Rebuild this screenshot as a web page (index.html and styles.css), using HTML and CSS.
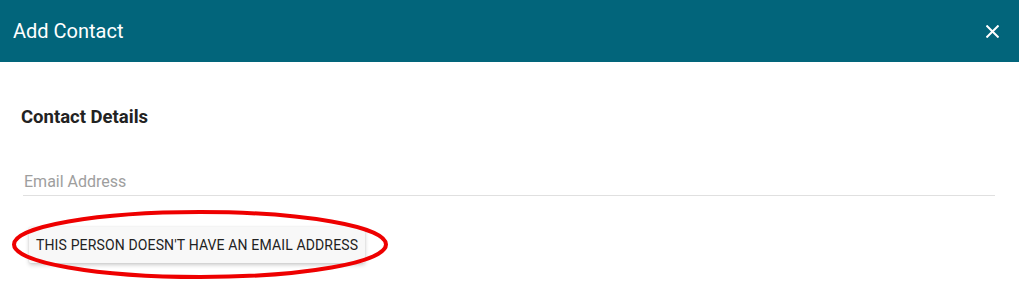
FILE: index.html
```html
<!DOCTYPE html>
<html lang="en">
<head>
<meta charset="UTF-8">
<meta name="viewport" content="width=device-width, initial-scale=1.0">
<title>Add Contact</title>
<link rel="stylesheet" href="styles.css">
</head>
<body>
<div class="dialog">
    <header class="dialog-header">
        <h1>Add Contact</h1>
        <button class="close-btn" aria-label="Close">
            <svg width="13" height="13" viewBox="0 0 13 13">
                <path d="M0.5 0.5 L12.5 12.5 M12.5 0.5 L0.5 12.5" stroke="#fff" stroke-width="2" fill="none"/>
            </svg>
        </button>
    </header>
    <div class="dialog-body">
        <h2>Contact Details</h2>
        <div class="field">
            <input type="email" placeholder="Email Address">
        </div>
        <div class="no-email">
            <button class="flat-btn">This person doesn't have an email address</button>
            <svg class="highlight" width="382" height="74" viewBox="0 0 382 74">
                <ellipse cx="190" cy="36.5" rx="186" ry="32.5" fill="none" stroke="#ee0000" stroke-width="4"/>
            </svg>
        </div>
    </div>
</div>
</body>
</html>
```

FILE: styles.css
```css
body {
    margin: 0;
    font-family: Roboto, "Noto Sans", Arial, sans-serif;
    background: #fff;
}
.dialog {
    min-height: 293px;
}
.dialog-header {
    height: 62px;
    background-color: #02657b;
    display: flex;
    align-items: center;
    justify-content: space-between;
    padding: 0 20px 0 13px;
}
.dialog-header h1 {
    margin: 0;
    color: #fff;
    font-size: 20px;
    font-weight: 400;
}
.close-btn {
    background: none;
    border: none;
    padding: 0;
    display: flex;
    cursor: pointer;
}
.dialog-body {
    padding: 0 24px 30px 21px;
}
.dialog-body h2 {
    margin: 0;
    padding-top: 45px;
    font-size: 18.5px;
    font-weight: 700;
    color: #222;
    line-height: 20px;
}
.field {
    margin-top: 44px;
    margin-left: 2px;
    border-bottom: 1px solid #e0e0e0;
}
.field input {
    display: block;
    width: 100%;
    border: none;
    outline: none;
    padding: 0 0 2px 1px;
    font-family: inherit;
    font-size: 16px;
    line-height: 22px;
    color: #333;
    background: transparent;
}
.field input::placeholder {
    color: #9e9e9e;
}
.no-email {
    position: relative;
    margin-top: 31px;
    margin-left: 8px;
}
.flat-btn {
    display: block;
    height: 36px;
    padding: 0 7px;
    border: none;
    border-radius: 2px;
    background: #f8f8f8;
    box-shadow: 0 2px 4px rgba(0, 0, 0, 0.2), 0 0 2px rgba(0, 0, 0, 0.08);
    font-family: inherit;
    font-size: 14px;
    font-weight: 400;
    letter-spacing: 0.01em;
    text-transform: uppercase;
    color: #222;
}
.highlight {
    position: absolute;
    left: -19px;
    top: -19px;
    pointer-events: none;
}
```
